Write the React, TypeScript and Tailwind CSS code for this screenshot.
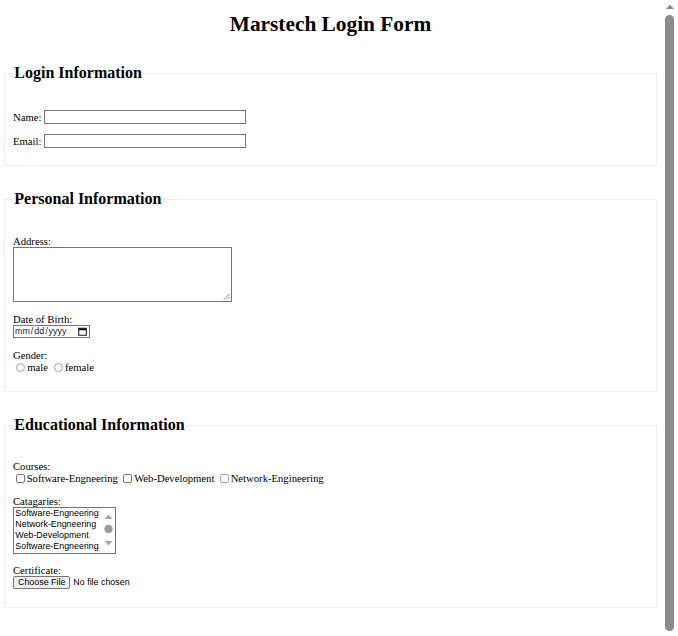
import * as React from 'react';

const serif = "font-['Liberation_Serif','Times_New_Roman',serif]";
const sans = "font-['Liberation_Sans',Arial,sans-serif]";

function Section({ legend, className, children }: { legend: string; className?: string; children: React.ReactNode }) {
  return (
    <fieldset className={`mx-[4px] mb-[24px] border border-[#eeeeee] px-[8px] ${className ?? ''}`}>
      <legend className="px-[1.33px] text-[16px] font-bold leading-[18px]">{legend}</legend>
      {children}
    </fieldset>
  );
}

function TextBox() {
  return <span className="inline-block h-[14px] w-[202px] border border-[#767676] bg-white" />;
}

function Checkbox({ light }: { light?: boolean }) {
  return (
    <span
      className={`ml-[2.67px] mr-[2px] inline-block h-[9px] w-[9px] rounded-[2px] border bg-white align-[-1px] ${
        light ? 'border-[#a8a8a8]' : 'border-[#767676]'
      }`}
    />
  );
}

function Radio() {
  return (
    <span className="ml-[3.33px] mr-[2px] inline-block h-[9px] w-[9px] rounded-full border border-[#a0a0a0] bg-white align-[-0.5px]" />
  );
}

function Scrollbar() {
  return (
    <div className="flex w-[17px] flex-col items-center bg-white pt-[4px] pb-[5px]">
      <svg width="8" height="5" viewBox="0 0 8 5">
        <polygon points="0,5 4,0.5 8,5" fill="#8b8b8b" />
      </svg>
      <div className="mt-[6px] w-[9px] flex-1 rounded-full bg-[#8b8b8b]" />
    </div>
  );
}

export default function App() {
  return (
    <div className={`flex h-[636px] overflow-hidden bg-white text-black ${serif}`}>
      <main className="flex-1 text-[10.67px] leading-[12px]">
        <h1 className="mt-[12px] mb-[28px] text-center text-[21.33px] font-bold leading-[24px]">Marstech Login Form</h1>

        <form>
          {/* Login */}
          <Section legend="Login Information" className="pb-[17px]">
            <div className="mt-[28px] flex items-center gap-[2.7px]">
              <span>Name:</span>
              <TextBox />
            </div>
            <div className="mt-[10px] flex items-center gap-[2.7px]">
              <span>Email:</span>
              <TextBox />
            </div>
          </Section>

          {/* Personal */}
          <Section legend="Personal Information" className="pb-[18px]">
            <div className="mt-[27px]">Address:</div>
            <div className="flex h-[55px] w-[219px] items-end justify-end border border-[#767676] bg-white p-[1px]">
              <svg width="7" height="7" viewBox="0 0 7 7">
                <path d="M6.5 1 L1 6.5 M6.5 4 L4 6.5" stroke="#6b6b6b" strokeWidth="0.9" fill="none" />
              </svg>
            </div>

            <div className="mt-[11px]">Date of Birth:</div>
            <div className={`flex h-[13px] w-[77px] items-center justify-between border border-[#767676] bg-white pl-[1px] pr-[2px] text-[8.89px] leading-[11px] text-[#1a1a2e] ${sans}`}>
              <span>
                mm<span className="mx-[1px]">/</span>dd<span className="mx-[1px]">/</span>yyyy
              </span>
              <svg width="9" height="9" viewBox="0 0 9 9">
                <rect x="0.75" y="1.25" width="7.5" height="7" fill="none" stroke="#111" strokeWidth="1" />
                <rect x="0.75" y="1.25" width="7.5" height="2" fill="#111" />
              </svg>
            </div>

            <div className="mt-[11px]">Gender:</div>
            <div>
              <Radio />male <Radio />female
            </div>
          </Section>

          {/* Educational */}
          <Section legend="Educational Information" className="pb-[18px]">
            <div className="mt-[26px]">Courses:</div>
            <div className="whitespace-nowrap">
              <Checkbox />Software-Engneering <Checkbox />Web-Development <Checkbox light />Network-Engineering
            </div>

            <div className="mt-[11px]">Catagaries:</div>
            <div className={`flex h-[47px] w-[103px] border border-[#767676] bg-white text-[8.89px] leading-[11.1px] ${sans}`}>
              <div className="flex-1 overflow-hidden whitespace-nowrap pl-[1.33px]">
                <div>Software-Engneering</div>
                <div>Network-Engneering</div>
                <div>Web-Development</div>
                <div>Software-Engneering</div>
              </div>
              <svg width="13" height="45" viewBox="0 0 13 45" className="shrink-0">
                <polygon points="2.5,11 6.5,6.5 10.5,11" fill="#a8a8a8" />
                <circle cx="6.5" cy="21" r="4.2" fill="#9c9c9c" />
                <polygon points="2.5,33 10.5,33 6.5,37.5" fill="#a8a8a8" />
              </svg>
            </div>

            <div className="mt-[10px]">Certificate:</div>
            <div className={`flex items-center text-[8.89px] leading-[11px] ${sans}`}>
              <span className="flex h-[13px] items-center rounded-[2px] border border-[#767676] bg-[#efefef] px-[4px]">Choose File</span>
              <span className="ml-[3px]">No file chosen</span>
            </div>
          </Section>
        </form>
      </main>
      <Scrollbar />
    </div>
  );
}
